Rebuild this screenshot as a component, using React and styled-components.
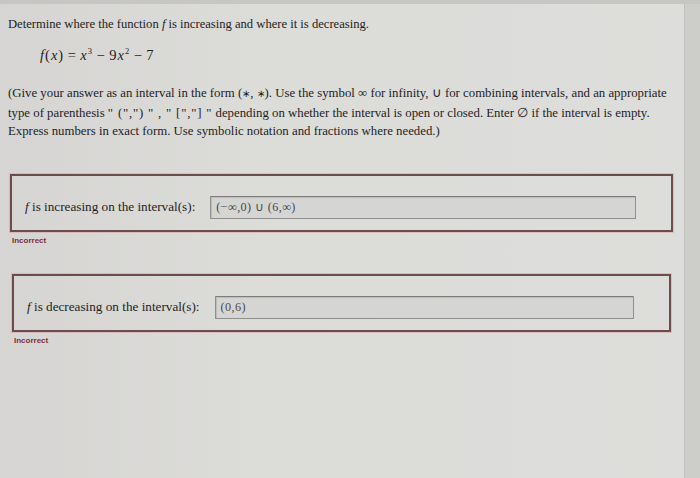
import React from 'react'
import styled, { createGlobalStyle } from 'styled-components'

const Global = createGlobalStyle`
  html, body {
    margin: 0;
    padding: 0;
    width: 700px;
    height: 478px;
    overflow: hidden;
    background: #d9d9d6;
  }
`

const Screen = styled.div`
  display: flex;
  flex-direction: column;
  width: 700px;
  height: 478px;
  font-family: "Liberation Serif", "Times New Roman", serif;
  color: #1e1e1e;
`

const TopEdge = styled.div`
  height: 4px;
  background: #c6c6c3;
  flex-shrink: 0;
`

const Body = styled.div`
  display: flex;
  flex: 1;
`

const Page = styled.div`
  width: 676px;
  padding-left: 8px;
  background: linear-gradient(90deg, #d6d5d3 0%, #dcdcd9 40%, #dddddb 100%);
`

const SideEdge = styled.div`
  flex: 1;
  background: #cdcdca;
  border-left: 1px solid #c2c2bf;
`

const Title = styled.div`
  margin-top: 11px;
  font-size: 12.6px;
  line-height: 18px;
`

const Equation = styled.div`
  margin-top: 13px;
  padding-left: 32px;
  font-size: 14.5px;
  line-height: 18px;
  letter-spacing: 1px;
`

const Op = styled.span`
  margin: 0 3.5px;
`

const Sup = styled.sup`
  font-size: 8.5px;
  line-height: 0;
  vertical-align: 6px;
`

const Instructions = styled.div`
  margin-top: 20px;
  font-size: 12.8px;
  line-height: 18.5px;
`

const Line = styled.div`
  white-space: nowrap;
`

const Star = styled.span`
  font-size: 10px;
`

const Quote = styled.span`
  letter-spacing: 0.8px;
`

const Part = styled.div`
  margin-top: ${p => p.gap}px;
  margin-left: ${p => p.shift}px;
`

const AnswerBox = styled.div`
  display: flex;
  align-items: center;
  width: ${p => p.width}px;
  height: 58px;
  box-sizing: border-box;
  border: 2px solid #6f4c4c;
  box-shadow: 0 0 0 1px rgba(200, 140, 140, 0.35);
  padding: 0 35px 0 ${p => p.padLeft}px;
`

const Row = styled.div`
  display: flex;
  align-items: center;
  gap: 15px;
  width: 100%;
  margin-top: 9px;
`

const Label = styled.span`
  font-size: 13.2px;
  white-space: nowrap;
`

const Field = styled.div`
  flex: 1;
  height: 23px;
  box-sizing: border-box;
  border: 1.5px solid #8f8f8d;
  border-top-color: #7c7c7a;
  border-radius: 1px;
  background: #d5d5d3;
  box-shadow: inset 1px 1px 1px rgba(0, 0, 0, 0.12);
  display: flex;
  align-items: center;
  padding-left: 5px;
  font-size: 12.2px;
  color: #4a4a4a;
  letter-spacing: 0.4px;
`

const Verdict = styled.div`
  margin-top: 4px;
  margin-left: 2px;
  font-family: "Liberation Sans", Arial, sans-serif;
  font-size: 8px;
  font-weight: bold;
  line-height: 10px;
  color: #7d2f3c;
`

const I = styled.i`
  font-style: italic;
`

const answers = [
  { id: 'inc', word: 'increasing', value: '(−∞,0) ∪ (6,∞)', gap: 33, shift: 2, width: 663, padLeft: 13 },
  { id: 'dec', word: 'decreasing', value: '(0,6)', gap: 28, shift: 4, width: 659, padLeft: 13 }
]

export default function App() {
  return (
    <Screen>
      <Global />
      <TopEdge />
      <Body>
        <Page>
          <Title>
            Determine where the function <I>f</I> is increasing and where it is decreasing.
          </Title>
          <Equation>
            <I>f</I>(<I>x</I>)<Op>=</Op><I>x</I><Sup>3</Sup><Op>−</Op>9<I>x</I><Sup>2</Sup><Op>−</Op>7
          </Equation>
          <Instructions>
            <Line>
              (Give your answer as an interval in the form (<Star>∗</Star>, <Star>∗</Star>). Use the symbol ∞ for infinity, ∪ for combining intervals, and an appropriate
            </Line>
            <Line>
              type of parenthesis <Quote>" (",") " , " [","] "</Quote> depending on whether the interval is open or closed. Enter ∅ if the interval is empty.
            </Line>
            <Line>
              Express numbers in exact form. Use symbolic notation and fractions where needed.)
            </Line>
          </Instructions>
          {answers.map(a => (
            <Part key={a.id} gap={a.gap} shift={a.shift}>
              <AnswerBox width={a.width} padLeft={a.padLeft}>
                <Row>
                  <Label><I>f</I> is {a.word} on the interval(s):</Label>
                  <Field>{a.value}</Field>
                </Row>
              </AnswerBox>
              <Verdict>Incorrect</Verdict>
            </Part>
          ))}
        </Page>
        <SideEdge />
      </Body>
    </Screen>
  )
}
